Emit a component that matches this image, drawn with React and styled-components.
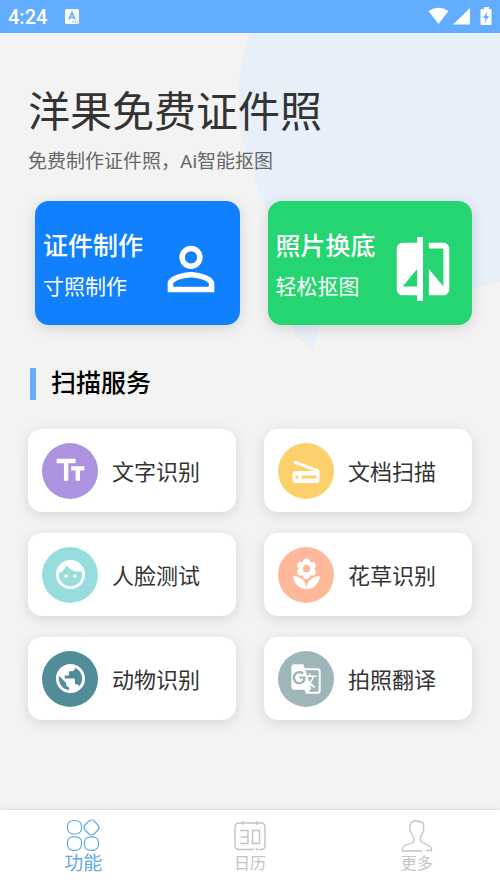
import React, { useState } from 'react';
import styled, { createGlobalStyle } from 'styled-components';
import {
    MdPersonOutline,
    MdCompare,
    MdTextFields,
    MdScanner,
    MdLocalFlorist,
    MdPublic,
    MdGTranslate,
} from 'react-icons/md';

const GlobalStyle = createGlobalStyle`
    * {
        box-sizing: border-box;
    }

    body {
        margin: 0;
        background: #f3f3f3;
        font-family: Roboto, "Noto Sans CJK SC", sans-serif;
    }

    button {
        border: 0;
        padding: 0;
        font: inherit;
        cursor: pointer;
    }

    h1, h2, p {
        margin: 0;
    }
`;

const Page = styled.div`
    position: relative;
    display: flex;
    flex-direction: column;
    min-height: 100vh;
    overflow: hidden;
`;

const StatusBar = styled.header`
    display: flex;
    align-items: center;
    justify-content: space-between;
    height: 33px;
    padding: 0 8px;
    background: #62adff;
    color: #fff;
`;

const StatusGroup = styled.div`
    display: flex;
    align-items: center;
    gap: 18px;
`;

const Clock = styled.span`
    font-size: 20px;
    font-weight: 500;
    line-height: 24px;
`;

const Bubble = styled.svg`
    position: absolute;
    z-index: -1;
    top: 33px;
    right: 0;
    width: 262px;
    height: 320px;
`;

const Main = styled.main`
    flex: 1;
    padding: 54px 28px 24px;
`;

const Title = styled.h1`
    font-size: 42px;
    font-weight: 400;
    line-height: 52px;
    color: #333;
`;

const Subtitle = styled.p`
    margin-top: 11px;
    font-size: 19px;
    font-weight: 400;
    line-height: 24px;
    color: #666;
`;

const Features = styled.div`
    display: grid;
    grid-template-columns: 1fr 1fr;
    gap: 28px;
    margin-top: 27px;
    padding-left: 7px;
`;

const FeatureCard = styled.button`
    display: flex;
    align-items: center;
    justify-content: space-between;
    height: 124px;
    padding: 12px 14px 0 8px;
    border-radius: 14px;
    background: ${({ $color }) => $color};
    box-shadow: 0 3px 14px rgba(0, 0, 0, 0.14);
    color: #fff;
    text-align: left;
`;

const FeatureText = styled.span`
    display: flex;
    flex-direction: column;
    gap: 8px;
    padding-bottom: 5px;
    white-space: nowrap;
`;

const FeatureName = styled.span`
    font-size: 25px;
    font-weight: 500;
    line-height: 32px;
`;

const FeatureHint = styled.span`
    font-size: 21px;
    font-weight: 400;
    line-height: 32px;
`;

const SectionTitle = styled.h2`
    display: flex;
    align-items: center;
    gap: 15px;
    margin: 42px 0 28px 2px;
    font-size: 25px;
    font-weight: 500;
    line-height: 34px;
    color: #000;

    &::before {
        content: '';
        width: 6px;
        height: 32px;
        background: #62adff;
    }
`;

const Services = styled.div`
    display: grid;
    grid-template-columns: 1fr 1fr;
    gap: 21px 28px;
`;

const ServiceCard = styled.button`
    display: flex;
    align-items: center;
    gap: 14px;
    height: 83px;
    padding: 0 14px;
    border-radius: 14px;
    background: #fff;
    box-shadow: 0 3px 14px rgba(0, 0, 0, 0.12);
    color: #333;
`;

const ServiceIcon = styled.span`
    display: flex;
    align-items: center;
    justify-content: center;
    width: 56px;
    height: 56px;
    border-radius: 50%;
    background: ${({ $color }) => $color};
    color: #fff;
`;

const ServiceName = styled.span`
    padding-top: 4px;
    font-size: 22px;
    font-weight: 400;
    line-height: 32px;
`;

const TabBar = styled.nav`
    display: grid;
    grid-template-columns: repeat(3, 1fr);
    height: 78px;
    background: #fff;
    box-shadow: 0 -1px 3px rgba(0, 0, 0, 0.1);
`;

const Tab = styled.button`
    display: flex;
    flex-direction: column;
    align-items: center;
    padding-top: 8px;
    background: none;
    color: ${({ $active }) => ($active ? '#62a8ea' : '#c4c4c4')};
    font-size: ${({ $active }) => ($active ? 19 : 16)}px;
    line-height: 24px;
`;

function FaceIcon({ size }) {
    return (
        <svg width={size} height={size} viewBox="0 0 24 24" fill="currentColor">
            <circle cx="9" cy="13" r="1.25" />
            <circle cx="15" cy="13" r="1.25" />
            <path
                fillRule="evenodd"
                d="M12 2a10 10 0 1 0 0 20a10 10 0 1 0 0-20zM12 20c-4.41 0-8-3.59-8-8 0-.29.02-.58.05-.86 2.36-1.05 4.23-2.98 5.21-5.37C11.07 8.33 14.05 10 17.42 10c.78 0 1.53-.09 2.25-.26.21.71.33 1.47.33 2.26 0 4.41-3.59 8-8 8z"
            />
        </svg>
    );
}

const features = [
    { name: '证件制作', hint: '寸照制作', color: '#1080ff', icon: MdPersonOutline },
    { name: '照片换底', hint: '轻松抠图', color: '#25d571', icon: MdCompare },
];

const services = [
    { name: '文字识别', color: '#ac92df', icon: MdTextFields, size: 35 },
    { name: '文档扫描', color: '#fcd06a', icon: MdScanner, size: 36 },
    { name: '人脸测试', color: '#98dddd', icon: FaceIcon, size: 35 },
    { name: '花草识别', color: '#ffb899', icon: MdLocalFlorist, size: 35 },
    { name: '动物识别', color: '#508d99', icon: MdPublic, size: 35 },
    { name: '拍照翻译', color: '#9eb5b9', icon: MdGTranslate, size: 32 },
];

function GridIcon() {
    return (
        <svg width="36" height="34" viewBox="0 0 36 34" fill="none" stroke="currentColor" strokeWidth="1.2">
            <rect x="2.5" y="2.5" width="14" height="13.5" rx="5.5" />
            <rect x="2.5" y="18.8" width="14" height="13.5" rx="5.5" />
            <rect x="19.5" y="18.8" width="14" height="13.5" rx="5.5" />
            <path d="M24 3q2.5-2 5 0l4 4q2 2.5 0 5l-4 4q-2.5 2-5 0l-4-4q-2-2.5 0-5z" />
        </svg>
    );
}

function CalendarIcon() {
    return (
        <svg width="36" height="34" viewBox="0 0 36 34" fill="none" stroke="currentColor" strokeWidth="1.4">
            <path d="M22 31.5H7q-4 0-4-4V9q0-4 4-4h22q4 0 4 4v18.500q0 4-4 4h-2M11 3v4M25 3v4M24 30l2 2.5" />
            <path d="M8 12.500h8v13H8M9 19h7M20.500 12.500h7v13h-7z" />
        </svg>
    );
}

function PersonIcon() {
    return (
        <svg width="36" height="34" viewBox="0 0 36 34" fill="none" stroke="currentColor" strokeWidth="1.3">
            <path d="M23 33H3.500q-.5-4 3.500-6l6-2q3.500-2 1-7-2-2-2.500-5-1.500-1-.5-3 0-6 3-6l1-1.500q5 1 8 1.500 2.500 2 1.500 6.500 1 2-.5 3.500-.5 2.500-2 4-2 4 1 6.500l6 2.500q4 2 3.500 5.500H27" />
        </svg>
    );
}

const tabs = [
    { name: '功能', icon: GridIcon },
    { name: '日历', icon: CalendarIcon },
    { name: '更多', icon: PersonIcon },
];

function StatusIcons() {
    return (
        <svg width="64" height="20" viewBox="0 0 64 20" fill="currentColor">
            <path d="M0.500 4Q10.500-2.500 20.500 4L10.500 17z" />
            <path d="M42 1v16.500H25z" />
            <path fillRule="evenodd" d="M56 0h5v2h1.500q1 0 1 1v14q0 1-1 1h-9q-1 0-1-1V3q0-1 1-1H56zM59.500 4l-4.500 7h2.500l-1 5 4.500-7h-2.500z" />
        </svg>
    );
}

function KeyboardIcon() {
    return (
        <svg width="14" height="15" viewBox="0 0 14 15">
            <rect width="14" height="15" rx="1.500" fill="#fff" />
            <path d="M4 10.500L7 3.500l3 7M5 8.500h4" fill="none" stroke="#62adff" strokeWidth="1.600" />
            <path d="M7 13h1.500M9.500 13H11M12 13h1" stroke="#62adff" />
        </svg>
    );
}

function App() {
    const [activeTab, setActiveTab] = useState('功能');

    return (
        <Page>
            <GlobalStyle />
            <Bubble viewBox="0 0 262 320" fill="#e7eff8" aria-hidden="true">
                <path d="M12 0C-4 48-3 94 14 138C26 178 44 202 48 240C50 270 53 293 58 304Q68 310 75 319L82 288C130 262 198 271 262 248V0z" />
            </Bubble>
            <StatusBar>
                <StatusGroup>
                    <Clock>4:24</Clock>
                    <KeyboardIcon />
                </StatusGroup>
                <StatusIcons />
            </StatusBar>
            <Main>
                <Title>洋果免费证件照</Title>
                <Subtitle>免费制作证件照，Ai智能抠图</Subtitle>
                <Features>
                    {features.map(({ name, hint, color, icon: Icon }) => (
                        <FeatureCard key={name} $color={color}>
                            <FeatureText>
                                <FeatureName>{name}</FeatureName>
                                <FeatureHint>{hint}</FeatureHint>
                            </FeatureText>
                            <Icon size={70} />
                        </FeatureCard>
                    ))}
                </Features>
                <SectionTitle>扫描服务</SectionTitle>
                <Services>
                    {services.map(({ name, color, icon: Icon, size }) => (
                        <ServiceCard key={name}>
                            <ServiceIcon $color={color}>
                                <Icon size={size} />
                            </ServiceIcon>
                            <ServiceName>{name}</ServiceName>
                        </ServiceCard>
                    ))}
                </Services>
            </Main>
            <TabBar>
                {tabs.map(({ name, icon: Icon }) => (
                    <Tab key={name} $active={name === activeTab} onClick={() => setActiveTab(name)}>
                        <Icon />
                        {name}
                    </Tab>
                ))}
            </TabBar>
        </Page>
    );
}

export default App;
